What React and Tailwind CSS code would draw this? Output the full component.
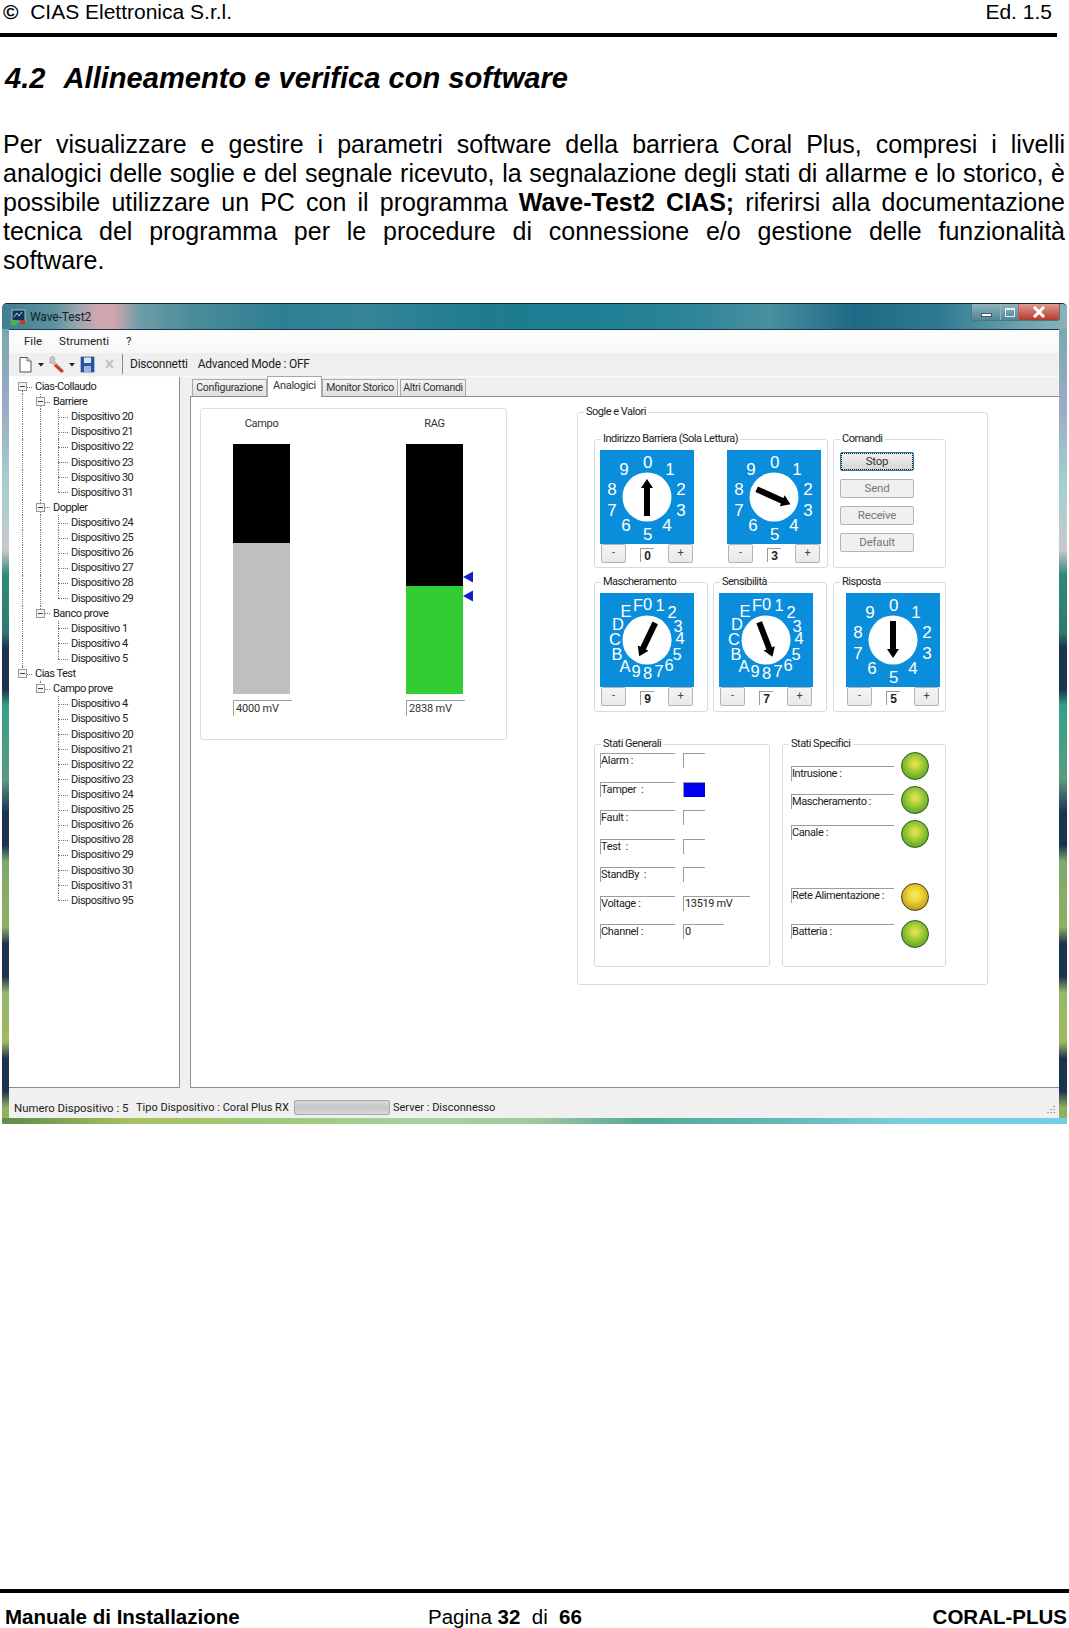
import React from 'react';

const UI = "[font-family:Roboto,'Liberation_Sans',sans-serif]";

function Group({ title, className = '', children }) {
  return (
    <div className={`relative border border-[#d6dde2] rounded-[3px] ${className}`}>
      <span className="absolute -top-[8px] left-[6px] bg-white px-[2px] text-[11px] tracking-[-0.5px] leading-[14px] text-[#222] whitespace-nowrap">{title}</span>
      {children}
    </div>
  );
}

function Pointer({ cx, cy, angle }) {
  return (
    <polygon
      points="-3,19 3,19 3,-9 6,-9 0,-18 -6,-9 -3,-9"
      fill="#000"
      transform={`translate(${cx} ${cy}) rotate(${angle})`}
    />
  );
}

const DEC = [['0',47.7,12],['1',70,19],['2',81,39],['3',81,60],['4',67,75],['5',47.7,84.7],['6',26,75],['7',12,60],['8',12,39],['9',24,19]];
const HEX = [['0',47.7,11],['1',60,12],['2',72,19],['3',78,33],['4',80,45],['5',77,61],['6',69,72],['7',59,78],['8',47.7,80],['9',36,78],['A',25,73],['B',17,61],['C',15,46],['D',18,31],['E',26,18],['F',38,12]];

function Dial({ labels, angle, value, size = 17 }) {
  return (
    <div className="w-[94px] flex flex-col">
      <svg width="94" height="94" viewBox="0 0 94 94" className="block">
        <rect width="94" height="94" fill="#0a8edb" />
        <circle cx="47" cy="47" r="24.5" fill="#fff" />
        {labels.map(([t, x, y]) => (
          <text key={t} x={x} y={y} fill="#fff" fontSize={size} textAnchor="middle" dominantBaseline="central" fontFamily="'Liberation Sans', sans-serif">{t}</text>
        ))}
        <Pointer cx={47} cy={47} angle={angle} />
      </svg>
      <div className="flex justify-between items-start px-[1px]">
        <StepButton>-</StepButton>
        <span className="mt-[4px] w-[14px] h-[14px] border-t border-l border-[#9a9a9a] text-center text-[12px] leading-[14px] font-bold text-[#222] [font-family:'Liberation_Sans',sans-serif]">{value}</span>
        <StepButton>+</StepButton>
      </div>
    </div>
  );
}

function StepButton({ children }) {
  return (
    <span className="w-[25px] h-[19px] flex items-center justify-center rounded-[2px] border border-[#b4b4b4] bg-[linear-gradient(#f4f4f4,#e9e9e9)] text-[11px] text-[#444]">{children}</span>
  );
}

function CmdButton({ children, active = false }) {
  return active ? (
    <span className="w-[74px] h-[19px] flex items-center justify-center rounded-[2px] border border-[#2f7ea8] outline-1 outline-dotted -outline-offset-2 outline-[#111] bg-[linear-gradient(#f2f2f2,#d4d4d4)] text-[11.5px] tracking-[-0.2px] text-[#333]">{children}</span>
  ) : (
    <span className="w-[74px] h-[19px] flex items-center justify-center rounded-[2px] border border-[#b4b4b4] bg-[#f0f0f0] text-[11.5px] tracking-[-0.2px] text-[#777]">{children}</span>
  );
}

function Bar({ label, top, topH, fill, fillH, value, markers = false }) {
  return (
    <div className="w-[59px] flex flex-col">
      <span className="w-[57px] text-center text-[11px] tracking-[-0.3px] leading-[14px] text-[#333]">{label}</span>
      <div className="relative mt-[13px] w-[57px] h-[250px] flex flex-col">
        <div className={top} style={{ height: topH }} />
        <div className={fill} style={{ height: fillH }} />
        {markers && (
          <svg width="11" height="32" viewBox="0 0 11 32" className="absolute left-[57px] top-[127px]">
            <polygon points="0,6 10,0.5 10,11.5" fill="#1220c4" />
            <polygon points="0,25 10,19.5 10,30.5" fill="#1220c4" />
          </svg>
        )}
      </div>
      <span className="mt-[6px] h-[16px] border-t border-l border-[#a0a0a0] pl-[2px] text-[11px] tracking-[-0.2px] leading-[15px] text-[#333]">{value}</span>
    </div>
  );
}

const GEN = [
  { l: 'Alarm :', v: '', w: 'w-[22px]' },
  { l: 'Tamper  :', v: '', w: 'w-[22px]', blue: true },
  { l: 'Fault :', v: '', w: 'w-[22px]' },
  { l: 'Test  :', v: '', w: 'w-[22px]' },
  { l: 'StandBy  :', v: '', w: 'w-[22px]' },
  { l: 'Voltage :', v: '13519 mV', w: 'w-[67px]' },
  { l: 'Channel :', v: '0', w: 'w-[41px]' },
];

const GREEN = 'border border-[#2c5a1e] bg-[radial-gradient(circle_at_50%_42%,#e8e64e_0%,#c0d540_25%,#7cb92e_58%,#5f9f28_82%,#2c5a1e_100%)]';
const AMBER = 'border border-[#4f3f12] bg-[radial-gradient(circle_at_50%_42%,#f8ee66_0%,#ecd534_35%,#cbaa20_66%,#a88c1c_84%,#4f3f12_100%)]';

const SPEC = [
  { l: 'Intrusione :', row: 'mt-[7px]', lab: 'mt-[14px]', led: GREEN },
  { l: 'Mascheramento :', row: 'mt-[6px]', lab: 'mt-[8px]', led: GREEN },
  { l: 'Canale :', row: 'mt-[6px]', lab: 'mt-[5px]', led: GREEN },
  { l: 'Rete Alimentazione :', row: 'mt-[35px]', lab: 'mt-[5px]', led: AMBER },
  { l: 'Batteria :', row: 'mt-[9px]', lab: 'mt-[4px]', led: GREEN },
];

const TREE = [
  { t: 'Cias-Collaudo', kind: 'root', line: 'down' },
  { t: 'Barriere', kind: 'sub', g: [1], line: 'full' },
  ...[20, 21, 22, 23, 30, 31].map((n, i) => ({ t: `Dispositivo ${n}`, kind: 'dev', g: [1, 1], last: i === 5 })),
  { t: 'Doppler', kind: 'sub', g: [1], line: 'full' },
  ...[24, 25, 26, 27, 28, 29].map((n, i) => ({ t: `Dispositivo ${n}`, kind: 'dev', g: [1, 1], last: i === 5 })),
  { t: 'Banco prove', kind: 'sub', g: [1], line: 'up' },
  ...[1, 4, 5].map((n, i) => ({ t: `Dispositivo ${n}`, kind: 'dev', g: [1, 0], last: i === 2 })),
  { t: 'Cias Test', kind: 'root', line: 'up' },
  { t: 'Campo prove', kind: 'sub', g: [0], line: 'up' },
  ...[4, 5, 20, 21, 22, 23, 24, 25, 26, 28, 29, 30, 31, 95].map((n, i) => ({ t: `Dispositivo ${n}`, kind: 'dev', g: [0, 0], last: i === 13 })),
];

function Guide({ on }) {
  return <span className={`w-[18px] h-full shrink-0 ${on ? 'border-l border-dotted border-[#777]' : ''}`} />;
}

function TreeRow({ item }) {
  const expand = item.kind !== 'dev';
  const halfUp = item.last || item.line === 'up';
  const down = item.line === 'down';
  return (
    <div className="flex h-[15.12px] items-stretch">
      {(item.g || []).map((on, i) => <Guide key={i} on={!!on} />)}
      <span className="relative w-[12px] shrink-0 h-full">
        <span className={`absolute left-0 w-0 border-l border-dotted border-[#777] ${down ? 'top-1/2 bottom-0' : halfUp ? 'top-0 bottom-1/2' : 'top-0 bottom-0'}`} />
        <span className="absolute left-0 top-1/2 w-[10px] border-t border-dotted border-[#777]" />
        {expand && (
          <span className="absolute -left-[4px] top-[3px] w-[9px] h-[9px] border border-[#9a9a9a] bg-[#f4f4f4] flex items-center justify-center">
            <span className="w-[5px] h-px bg-[#444]" />
          </span>
        )}
      </span>
      <span className="text-[11px] tracking-[-0.5px] leading-[15px] text-[#222] whitespace-nowrap bg-white pl-px">{item.t}</span>
    </div>
  );
}

function WinButtons() {
  return (
    <div className="flex h-[17px] mr-[7px] border border-t-0 border-[#4f7480] rounded-b-[3px] overflow-hidden">
      <span className="w-[28px] flex items-end justify-center pb-[3px] bg-[linear-gradient(#8fb4bd,#4f8796)]">
        <span className="w-[11px] h-[4px] bg-white border border-[#456]" />
      </span>
      <span className="w-[18px] flex items-center justify-center border-l border-[#8bb] bg-[linear-gradient(#8fb4bd,#4f8796)]">
        <span className="w-[10px] h-[9px] border border-[#e6f0f0] border-t-2" />
      </span>
      <span className="w-[41px] flex items-center justify-center border-l border-[#a66] bg-[linear-gradient(#e09a90,#b63a2e)]">
        <svg width="14" height="12" viewBox="0 0 14 12"><path d="M2 1 L12 11 M12 1 L2 11" stroke="#fff" strokeWidth="3" /></svg>
      </span>
    </div>
  );
}

function ToolIcons() {
  return (
    <svg width="105" height="20" viewBox="0 0 105 20" className="shrink-0">
      <path d="M1 3.5 H8 L12 7 V18 H1 Z" fill="#fff" stroke="#555" strokeWidth="1" />
      <path d="M8 3.5 V7 H12" fill="#ddd" stroke="#555" strokeWidth="0.8" />
      <polygon points="19,9 25,9 22,12.5" fill="#222" />
      <path d="M31 4 L34 2 L36 5 L35 7 L44 16 L42 18 L33 9 L31 9 Z" fill="#c9c9c9" stroke="#777" strokeWidth="0.5" />
      <path d="M37 10 L45 17 L42.5 19 L35 12 Z" fill="#d63a2a" />
      <polygon points="50,9 56,9 53,12.5" fill="#222" />
      <rect x="62" y="3" width="13" height="15" fill="#2b55a8" stroke="#1d3a78" strokeWidth="0.6" />
      <rect x="65" y="3.5" width="7" height="5.5" fill="#dbe6f5" />
      <rect x="65" y="12" width="7" height="6" fill="#9fb5d8" />
      <path d="M87 6 L94 14 M94 6 L87 14" stroke="#c4c4c4" strokeWidth="2.2" />
    </svg>
  );
}

const LINES = [
  'Per visualizzare e gestire i parametri software della barriera Coral Plus, compresi i livelli',
  'analogici delle soglie e del segnale ricevuto, la segnalazione degli stati di allarme e lo storico, è',
];

const TAB = 'h-[17px] text-center leading-[16px] border border-b-0 border-[#a8a8a8] bg-[linear-gradient(#f4f4f4,#dfdfdf)]';

export default function App() {
  return (
    <div className="w-[1069px] h-[1628px] bg-white flex flex-col text-black [font-family:'Liberation_Sans',Arial,sans-serif] overflow-hidden">
      <header className="w-[1057px] h-[37px] border-b-4 border-black flex justify-between items-start pl-[3px] pr-[5px] text-[21px] leading-[24px]">
        <span className="whitespace-pre"><b>©</b>  CIAS Elettronica S.r.l.</span>
        <span>Ed. 1.5</span>
      </header>

      <h1 className="mt-[25px] ml-[5px] text-[29.1px] leading-[33px] font-bold italic whitespace-pre">4.2<span className="ml-[3px]">  </span>Allineamento e verifica con software</h1>

      <div className="mt-[35px] ml-[3px] w-[1062px] text-[25px] leading-[29px]">
        {LINES.map((l) => (
          <div key={l} className="[text-align-last:justify] whitespace-nowrap">{l}</div>
        ))}
        <div className="[text-align-last:justify]">possibile utilizzare un PC con il programma <b>Wave-Test2 CIAS;</b> riferirsi alla documentazione</div>
        <div className="[text-align-last:justify]">tecnica del programma per le procedure di connessione e/o gestione delle funzionalità</div>
        <div>software.</div>
      </div>

      {/* Screenshot of the Wave-Test2 window */}
      <section className={`mt-[28px] ml-[2px] w-[1065px] h-[821px] shrink-0 flex flex-col rounded-t-[5px] border-t border-[#0c2a36] bg-[linear-gradient(#6fa8a8,#9aa9c4_12%,#a5cfcf_22%,#c8c8cc_30%,#2f8a78_33%,#2f7a70_40%,#1c3350_42%,#1c3350_47%,#35a088_49%,#5a9a80_58%,#1c3350_62%,#1c3350_66%,#7fa870_68%,#8fb060_76%,#1c3350_78%,#1c3350_82%,#94b868_84%,#a0b860_90%,#1c3350_92%,#1c3350_96%,#90b060_98%)] ${UI}`}>
        <div className="h-[25px] shrink-0 flex items-start justify-between rounded-t-[5px] bg-[linear-gradient(90deg,#3f7f90_0%,#5d929f_5%,#9aa6ad_7%,#d2a7af_9%,#cfa6ae_10.5%,#6c9ca6_13%,#4b8c9a_18%,#2f7f93_26%,#358597_34%,#1f7b90_45%,#1c7e93_55%,#2f8599_65%,#4a8fa0_72%,#1e6a86_80%,#2f7a92_88%,#6fa3ae_96%,#8ab2ba_100%)]">
          <div className="flex items-center h-[25px] pl-[9px]">
            <svg width="15" height="16" viewBox="0 0 15 16" className="shrink-0">
              <rect x="1" y="1" width="13" height="11" fill="#1c2f5a" stroke="#ccd" strokeWidth="0.8" />
              <path d="M3 8 L6 4 L8 7 L11 3" stroke="#6fd" strokeWidth="1" fill="none" />
              <rect x="0" y="11" width="6" height="5" fill="#55b04a" />
              <rect x="9" y="11" width="5" height="4" fill="#c9352a" />
            </svg>
            <span className="ml-[4px] text-[12px] text-[#10242c] tracking-[-0.1px]">Wave-Test2</span>
          </div>
          <WinButtons />
        </div>

        <div className="flex-1 min-h-0 ml-[7px] mr-[8px] flex flex-col border-t border-[#173a48] bg-[#f0f0f0]">
          <div className="h-[23px] shrink-0 flex items-center gap-[17px] pl-[15px] bg-[linear-gradient(#fdfdfd,#f7f7f7)] text-[11.5px] text-[#222]">
            <span>File</span><span>Strumenti</span><span>?</span>
          </div>
          <div className="h-[24px] shrink-0 flex items-center pl-[10px] pb-px bg-[#efefef] border-b border-[#fafafa] text-[12px] tracking-[-0.25px] text-[#222]">
            <ToolIcons />
            <span className="w-px h-[20px] bg-[#8a8a8a] mr-[7px] -ml-[2px]" />
            <span>Disconnetti</span>
            <span className="ml-[10px]">Advanced Mode : OFF</span>
          </div>

          <div className="h-[711px] shrink-0 flex text-[#222]">
            <nav className="w-[171px] h-full shrink-0 bg-white border-r border-b border-[#8d8d8d] pl-[13px] pt-[2px]">
              {TREE.map((item, i) => <TreeRow key={i} item={item} />)}
            </nav>
            <div className="flex-1 flex flex-col ml-[10px] min-w-0">
              <div className="h-[19px] shrink-0 flex items-end pl-[2px] gap-px text-[10.5px] tracking-[-0.3px] text-[#333]">
                <span className={`w-[75px] ${TAB}`}>Configurazione</span>
                <span className="relative z-10 -mb-px -mx-px w-[55px] h-[21px] text-center leading-[17px] text-[11px] border border-b-0 border-[#a8a8a8] bg-white">Analogici</span>
                <span className={`w-[76px] ${TAB}`}>Monitor Storico</span>
                <span className={`w-[66px] ml-px ${TAB}`}>Altri Comandi</span>
              </div>
              <main className="flex-1 min-h-0 bg-white border-t border-l border-b border-[#8d8d8d] flex items-start pl-[9px] pt-[11px]">
                <div className="w-[307px] h-[332px] shrink-0 border border-[#dcdfe2] rounded-[3px] pl-[32px] pt-[8px] flex gap-[114px]">
                  <Bar label="Campo" top="bg-black" topH={99} fill="bg-[#bfbfbf]" fillH={151} value="4000 mV" />
                  <Bar label="RAG" top="bg-black" topH={142} fill="bg-[#33cc33]" fillH={108} value="2838 mV" markers />
                </div>

                <Group title="Sogle e Valori" className="ml-[70px] mt-[4px] w-[411px] h-[573px] shrink-0 pl-[16px] pt-[26px]">
                  <div className="flex gap-[5px]">
                    <Group title="Indirizzo Barriera (Sola Lettura)" className="w-[234px] h-[129px] pl-[5px] pt-[10px] flex gap-[33px]">
                      <Dial labels={DEC} angle={0} value="0" />
                      <Dial labels={DEC} angle={114} value="3" />
                    </Group>
                    <Group title="Comandi" className="w-[113px] h-[129px] pl-[6px] pt-[12px] flex flex-col gap-[8px]">
                      <CmdButton active>Stop</CmdButton>
                      <CmdButton>Send</CmdButton>
                      <CmdButton>Receive</CmdButton>
                      <CmdButton>Default</CmdButton>
                    </Group>
                  </div>

                  <div className="flex mt-[14px]">
                    <Group title="Mascheramento" className="w-[114px] h-[130px] pl-[5px] pt-[10px]">
                      <Dial labels={HEX} angle={205.6} value="9" size={16.5} />
                    </Group>
                    <Group title="Sensibilità" className="ml-[5px] w-[114px] h-[130px] pl-[5px] pt-[10px]">
                      <Dial labels={HEX} angle={159} value="7" size={16.5} />
                    </Group>
                    <Group title="Risposta" className="ml-[6px] w-[113px] h-[130px] pl-[12px] pt-[10px]">
                      <Dial labels={DEC} angle={180} value="5" />
                    </Group>
                  </div>

                  <div className="flex mt-[32px] gap-[12px]">
                    <Group title="Stati Generali" className="w-[176px] h-[223px] pl-[5px] pt-[8px] flex flex-col gap-[14.5px]">
                      {GEN.map((r) => (
                        <div key={r.l} className="flex gap-[8px] h-[14px] text-[11px] tracking-[-0.35px]">
                          <span className="w-[75px] h-[15px] border-t border-l border-[#9d9d9d] leading-[14px] whitespace-pre text-[#222]">{r.l}</span>
                          <span className={`${r.w} h-[15px] border-t border-l border-[#9d9d9d] leading-[14px] pl-px text-[#222] ${r.blue ? 'bg-[#0000f0]' : ''}`}>{r.v}</span>
                        </div>
                      ))}
                    </Group>
                    <Group title="Stati Specifici" className="w-[164px] h-[223px] pl-[8px]">
                      {SPEC.map((r) => (
                        <div key={r.l} className={`flex h-[28px] ${r.row}`}>
                          <span className={`w-[103px] h-[15px] border-t border-l border-[#9d9d9d] text-[11px] tracking-[-0.4px] leading-[14px] whitespace-nowrap text-[#222] ${r.lab}`}>{r.l}</span>
                          <span className={`ml-[7px] w-[28px] h-[28px] rounded-full ${r.led}`} />
                        </div>
                      ))}
                    </Group>
                  </div>
                </Group>
              </main>
            </div>
          </div>

          <div className="flex-1 flex items-start pt-[13px] pl-[5px] pr-[3px] text-[11px] leading-[14px] text-[#222] whitespace-pre">
            <span className="w-[122px] text-[11.4px]">Numero Dispositivo : 5</span>
            <span className="w-[158px]">Tipo Dispositivo : Coral Plus RX</span>
            <span className="w-[96px] h-[15px] -mt-px rounded-[2px] border border-[#a8a8a8] bg-[linear-gradient(#d8d8d8,#c8c8c8,#d8d8d8)]" />
            <span className="ml-[3px]">Server : Disconnesso</span>
            <svg width="10" height="10" viewBox="0 0 10 10" className="ml-auto mt-[4px]">
              <path d="M8 1v1 M8 4v1 M8 7v1 M5 4v1 M5 7v1 M2 7v1" stroke="#8a8a8a" strokeWidth="1.4" />
            </svg>
          </div>
        </div>
        <div className="h-[6px] shrink-0 rounded-b-[3px] bg-[linear-gradient(90deg,#5f8a4a_0%,#a8c060_12%,#9fc878_25%,#a8d0a0_40%,#a0c8a0_50%,#58a898_60%,#5fb8b0_72%,#78cfe0_85%,#6fd0e4_100%)]" />
      </section>

      <footer className="mt-auto h-[39px] shrink-0 border-t-4 border-black flex items-start pt-[12px] text-[20.5px] leading-[24px] pr-[2px]">
        <b className="ml-[5px] w-[423px]">Manuale di Installazione</b>
        <span className="whitespace-pre">Pagina <b>32</b>  di  <b>66</b></span>
        <b className="ml-auto">CORAL-PLUS</b>
      </footer>
    </div>
  );
}
